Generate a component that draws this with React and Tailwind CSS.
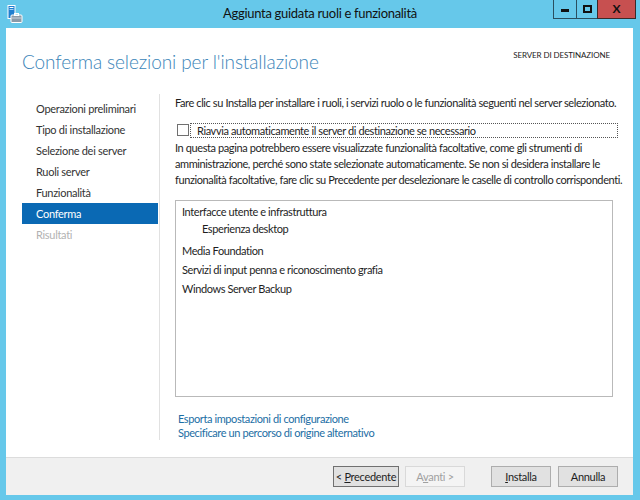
import React from "react";

const navItems = [
  { label: "Operazioni preliminari" },
  { label: "Tipo di installazione" },
  { label: "Selezione dei server" },
  { label: "Ruoli server" },
  { label: "Funzionalità" },
  { label: "Conferma", active: true },
  { label: "Risultati", disabled: true },
];

const features = [
  { label: "Interfacce utente e infrastruttura", children: ["Esperienza desktop"] },
  { label: "Media Foundation" },
  { label: "Servizi di input penna e riconoscimento grafia" },
  { label: "Windows Server Backup" },
];

const UI_FONT = "'Segoe UI', Lato, sans-serif";

const WizardIcon = () => (
  <svg width="16" height="18" viewBox="0 0 16 18">
    <rect x="1" y="0.5" width="7" height="13" fill="#1f7fd0" stroke="#fff" strokeWidth="1" />
    <rect x="2.5" y="2" width="4" height="1" fill="#fff" />
    <rect x="2.5" y="4" width="4" height="1" fill="#9fd0f5" />
    <rect x="4" y="10" width="11" height="7.5" rx="1" fill="#8a9aa8" stroke="#fff" strokeWidth="1" />
    <rect x="7.5" y="8.5" width="4" height="2" fill="none" stroke="#fff" strokeWidth="1" />
    <rect x="4.5" y="12.5" width="10" height="1" fill="#c9d3dc" />
  </svg>
);

const Button = ({ children, primary, disabled, className = "" }) => (
  <button
    className={`h-[21px] text-[11px] tracking-[-0.3px] leading-none whitespace-nowrap border ${
      disabled
        ? "bg-[#f4f4f4] border-[#d9d9d9] text-[#a0a0a0]"
        : primary
        ? "bg-[#e1e1e1] border-[#707070] text-[#1e1e1e]"
        : "bg-[#e1e1e1] border-[#adadad] text-[#1e1e1e]"
    } ${className}`}
  >
    {children}
  </button>
);

export default function App() {
  return (
    <div
      className="w-[640px] h-[500px] bg-[#66c8ea] flex flex-col overflow-hidden text-[#1e1e1e]"
      style={{ fontFamily: UI_FONT }}
    >
      {/* title bar */}
      <div className="h-[28px] flex items-start">
        <div className="pl-[7px] pt-[5px] shrink-0">
          <WizardIcon />
        </div>
        <div className="flex-1 text-center text-[13px] tracking-[-0.3px] leading-[27px] text-[#111] pl-[64px]">
          Aggiunta guidata ruoli e funzionalità
        </div>
        <div className="flex h-[19px] mr-[4px] shrink-0">
          <div className="w-[23px] h-full flex items-center justify-center border-l border-b border-[#2a4f5f]">
            <div className="w-[8px] h-[3px] bg-[#111] mt-[3px]" />
          </div>
          <div className="w-[21px] h-full flex items-center justify-center border-l border-b border-[#2a4f5f]">
            <div className="w-[9px] h-[8px] border-2 border-[#111]" />
          </div>
          <div className="w-[39px] h-full flex items-center justify-center bg-[#c75050] border-l border-b border-r border-[#3a2a2a] text-[#111] text-[12px] font-bold">
            X
          </div>
        </div>
      </div>

      {/* window body */}
      <div className="flex-1 ml-[6px] mr-[7px] flex flex-col bg-white">
        {/* header */}
        <div className="h-[66px] flex items-start justify-between pl-[16px] pr-[23px]">
          <div
            className="pt-[24px] text-[19px] tracking-[-0.1px] font-light text-[#3a84b8] leading-none"
            style={{ fontFamily: "'Segoe UI Light', Lato, sans-serif" }}
          >
            Conferma selezioni per l'installazione
          </div>
          <div className="pt-[21px] text-[8px] tracking-[-0.1px] text-[#222]">SERVER DI DESTINAZIONE</div>
        </div>

        {/* body */}
        <div className="h-[346px] flex">
          <div className="w-[154px] shrink-0 border-r border-[#e1e1e1] pl-[16px] pt-[4px] pr-[1px]">
            {navItems.map((item) => (
              <div
                key={item.label}
                className={`h-[21px] leading-[21px] pl-[14px] text-[11px] tracking-[-0.3px] whitespace-nowrap ${
                  item.active
                    ? "bg-[#0a69b4] text-white"
                    : item.disabled
                    ? "text-[#b2b2b2]"
                    : "text-[#333]"
                }`}
              >
                {item.label}
              </div>
            ))}
          </div>

          <div className="flex-1 min-w-0 pl-[15px] pr-[15px] pt-[1px] text-[11px] tracking-[-0.4px] whitespace-nowrap">
            <p className="leading-[16px]">
              Fare clic su Installa per installare i ruoli, i servizi ruolo o le funzionalità seguenti nel server
              selezionato.
            </p>
            <div className="mt-[11px] flex items-center h-[16px]">
              <div className="w-[12px] h-[12px] shrink-0 border border-[#707070] bg-white ml-[2px]" />
              <div className="ml-[1px] flex-1 h-[15px] border border-dotted border-[#555] pl-[6px] leading-[13px]">
                Riavvia automaticamente il server di destinazione se necessario
              </div>
            </div>
            <p className="mt-[2px] leading-[16px]">
              In questa pagina potrebbero essere visualizzate funzionalità facoltative, come gli strumenti di
              <br />
              amministrazione, perché sono state selezionate automaticamente. Se non si desidera installare le
              <br />
              funzionalità facoltative, fare clic su Precedente per deselezionare le caselle di controllo corrispondenti.
            </p>
            <div className="mt-[12px] h-[197px] w-[438px] border border-[#b9b9b9] pl-[6px] pt-[2px]">
              {features.map((f) => (
                <div key={f.label} className="mb-[2px]">
                  <div className="leading-[17px]">{f.label}</div>
                  {f.children &&
                    f.children.map((c) => (
                      <div key={c} className="leading-[17px] pl-[20px] mb-[5px]">
                        {c}
                      </div>
                    ))}
                </div>
              ))}
            </div>
            <div className="mt-[15px] pl-[3px] text-[#1c6ea4] leading-[14px]">
              <div>Esporta impostazioni di configurazione</div>
              <div>Specificare un percorso di origine alternativo</div>
            </div>
          </div>
        </div>

        <div className="flex-1" />

        {/* footer */}
        <div className="h-[38px] bg-[#f0f0f0] border-t border-[#dcdcdc] flex items-center justify-end pr-[15px]">
          <Button primary className="w-[66px]">
            &lt; <span className="underline">P</span>recedente
          </Button>
          <Button disabled className="w-[60px] ml-[6px]">
            A<span className="underline">v</span>anti &gt;
          </Button>
          <Button className="w-[60px] ml-[26px]">
            <span className="underline">I</span>nstalla
          </Button>
          <Button className="w-[60px] ml-[7px]">Annulla</Button>
        </div>
      </div>
      <div className="h-[5px]" />
    </div>
  );
}
